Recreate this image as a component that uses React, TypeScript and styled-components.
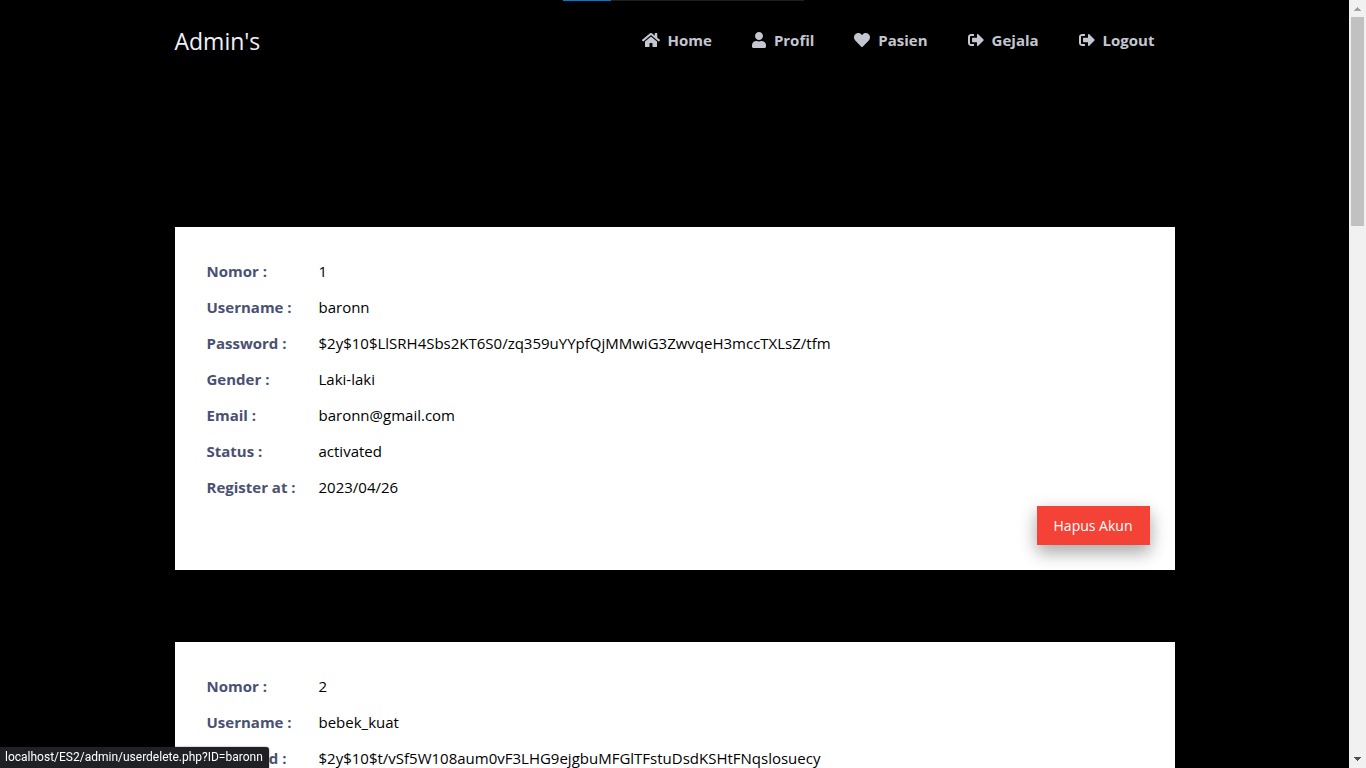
import React from "react";
import styled, { createGlobalStyle } from "styled-components";
import { FaHome, FaUser, FaHeart, FaSignOutAlt } from "react-icons/fa";

const GlobalStyle = createGlobalStyle`
  * { box-sizing: border-box; }
  body {
    margin: 0;
    background: #000;
    color: #000;
    font-family: "Segoe UI", "Open Sans", "Noto Sans", sans-serif;
    font-size: 15px;
    line-height: 24px;
  }
`;

const Window = styled.div`
  display: flex;
  height: 100vh;
  overflow: hidden;
`;

const Page = styled.div`
  flex: 1;
  min-width: 0;
  overflow: hidden;
  background: #000;
`;

const Container = styled.div`
  width: 100%;
  max-width: 1000px;
  margin: 0 auto;
`;

const Header = styled.header`
  display: flex;
  align-items: center;
  justify-content: space-between;
  height: 82px;
`;

const Brand = styled.a`
  color: #f0f2f8;
  font-size: 23px;
  line-height: 32px;
  text-decoration: none;
`;

const Nav = styled.nav`
  display: flex;
  gap: 40px;
  padding: 0 20px 2px 0;
`;

const NavLink = styled.a<{ $iconWidth: number }>`
  display: flex;
  align-items: center;
  gap: 8px;
  color: #c4c7d0;
  font-weight: 700;
  text-decoration: none;
  white-space: nowrap;

  svg {
    width: ${({ $iconWidth }) => $iconWidth}px;
    height: 16px;
  }
`;

const CardList = styled.main`
  display: flex;
  flex-direction: column;
  gap: 72px;
  padding: 145px 0 72px;
`;

const Card = styled.article`
  padding: 26px 25px 25px 32px;
  background: #fff;
`;

const Details = styled.table`
  border-collapse: collapse;

  th, td {
    height: 36px;
    padding: 0;
    text-align: left;
    white-space: nowrap;
  }
  th {
    width: 112px;
    color: #4a5072;
    font-weight: 700;
  }
`;

const Actions = styled.div`
  display: flex;
  justify-content: flex-end;
  margin-top: 1px;
`;

const DeleteButton = styled.button`
  padding: 8px 17px;
  border: 0;
  background: #f44336;
  color: #fff;
  font: inherit;
  font-size: 14px;
  line-height: 23px;
  cursor: pointer;
  box-shadow: 0 8px 16px 0 rgba(0, 0, 0, 0.2), 0 6px 20px 0 rgba(0, 0, 0, 0.19);
`;

const LoadTrack = styled.div`
  position: fixed;
  top: 0;
  left: 50%;
  width: 241px;
  height: 1px;
  margin-left: -120px;
  background: #1f1f1f;
`;

const LoadBar = styled.div`
  width: 20%;
  height: 100%;
  background: #0078d7;
`;

const LinkStatus = styled.div`
  position: fixed;
  bottom: 0;
  left: 0;
  padding: 0 6px 0 5px;
  border-top-right-radius: 3px;
  background: #202124;
  color: #fff;
  font-family: "Segoe UI", Roboto, sans-serif;
  font-size: 12px;
  line-height: 21px;
  box-shadow: 0 0 2px rgba(0, 0, 0, 0.5);
`;

const ScrollRail = styled.div`
  display: flex;
  flex-direction: column;
  align-items: center;
  justify-content: space-between;
  width: 17px;
  background: #f1f1f1;
`;

const ScrollThumb = styled.div`
  width: 13px;
  height: 209px;
  margin-bottom: auto;
  background: #c1c1c1;
`;

const Arrow = styled.svg`
  display: block;
  width: 17px;
  height: 17px;
`;

const links = [
  { label: "Home", Icon: FaHome, iconWidth: 18 },
  { label: "Profil", Icon: FaUser, iconWidth: 14 },
  { label: "Pasien", Icon: FaHeart, iconWidth: 16 },
  { label: "Gejala", Icon: FaSignOutAlt, iconWidth: 16 },
  { label: "Logout", Icon: FaSignOutAlt, iconWidth: 16 },
];

const users = [
  [
    ["Nomor :", "1"],
    ["Username :", "baronn"],
    ["Password :", "$2y$10$LlSRH4Sbs2KT6S0/zq359uYYpfQjMMwiG3ZwvqeH3mccTXLsZ/tfm"],
    ["Gender :", "Laki-laki"],
    ["Email :", "baronn@gmail.com"],
    ["Status :", "activated"],
    ["Register at :", "2023/04/26"],
  ],
  [
    ["Nomor :", "2"],
    ["Username :", "bebek_kuat"],
    ["Password :", "$2y$10$t/vSf5W108aum0vF3LHG9ejgbuMFGlTFstuDsdKSHtFNqslosuecy"],
  ],
];

export default function App() {
  return (
    <>
      <GlobalStyle />
      <Window>
        <Page>
          <Container>
            <Header>
              <Brand href="#">Admin's</Brand>
              <Nav>
                {links.map(({ label, Icon, iconWidth }) => (
                  <NavLink href="#" key={label} $iconWidth={iconWidth}>
                    <Icon aria-hidden />
                    {label}
                  </NavLink>
                ))}
              </Nav>
            </Header>
            <CardList>
              {users.map((rows, index) => (
                <Card key={index}>
                  <Details>
                    <tbody>
                      {rows.map(([label, value]) => (
                        <tr key={label}>
                          <th scope="row">{label}</th>
                          <td>{value}</td>
                        </tr>
                      ))}
                    </tbody>
                  </Details>
                  {rows.length > 3 && (
                    <Actions>
                      <DeleteButton type="button">Hapus Akun</DeleteButton>
                    </Actions>
                  )}
                </Card>
              ))}
            </CardList>
          </Container>
        </Page>
        <ScrollRail aria-hidden>
          <Arrow viewBox="0 0 17 17" shapeRendering="crispEdges">
            <path d="M8 7h1v1h1v1h1v1h1v1H5v-1h1V9h1V8h1z" fill="#a3a3a3" />
          </Arrow>
          <ScrollThumb />
          <Arrow viewBox="0 0 17 17" shapeRendering="crispEdges">
            <path d="M5 6h7v1h-1v1h-1v1H9v1H8V9H7V8H6V7H5z" fill="#505050" />
          </Arrow>
        </ScrollRail>
      </Window>
      <LoadTrack>
        <LoadBar />
      </LoadTrack>
      <LinkStatus>localhost/ES2/admin/userdelete.php?ID=baronn</LinkStatus>
    </>
  );
}
